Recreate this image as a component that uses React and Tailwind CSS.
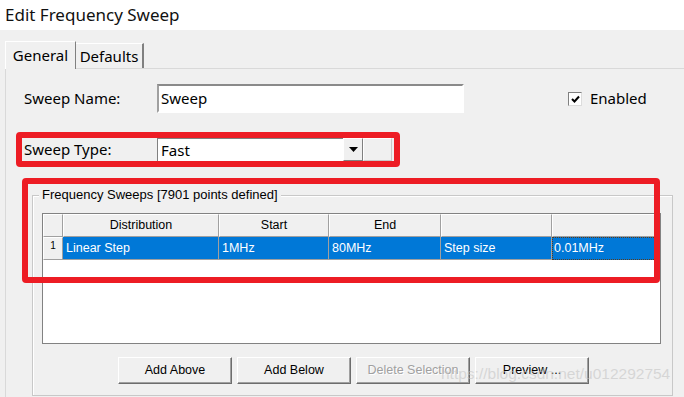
const ui = { fontFamily: '"Noto Sans", "Open Sans", sans-serif' };
const small = { fontFamily: '"Liberation Sans", Arial, sans-serif' };

const columns = [
  { label: "Distribution", w: "w-[156px]", value: "Linear Step" },
  { label: "Start", w: "w-[110px]", value: "1MHz" },
  { label: "End", w: "w-[112px]", value: "80MHz" },
  { label: "", w: "w-[111px]", value: "Step size" },
  { label: "", w: "w-[104px]", value: "0.01MHz" },
];

function WinButton({ children, disabled }) {
  return (
    <div className="flex h-[27px] w-[114px] items-center justify-center border border-t-white border-l-white border-r-[#6d6d6d] border-b-[#6d6d6d] bg-[#f0f0f0] shadow-[inset_-1px_-1px_0_#a0a0a0]">
      <span
        className={
          disabled
            ? "text-[12.5px] text-[#a0a0a0] [text-shadow:1px_1px_0_#ffffff]"
            : "text-[12.5px] text-black"
        }
      >
        {children}
      </span>
    </div>
  );
}

export default function App() {
  return (
    <div className="relative h-[397px] w-[684px] overflow-hidden bg-[#f0f0f0] text-black" style={ui}>
      {/* Title bar */}
      <div className="h-[30px] bg-white pl-[5px] text-[17px] leading-[30px] text-[#111]">
        Edit Frequency Sweep
      </div>

      {/* Tabs */}
      <div className="flex h-[38px] items-end pl-[5px]">
        <div className="relative z-10 -mb-px flex h-[28px] w-[71px] items-start justify-center border-l border-t border-r border-l-white border-t-white border-r-[#808080] bg-[#f0f0f0] pt-[2px] text-[15px]">
          General
        </div>
        <div className="flex h-[25px] w-[68px] items-start justify-center border-t border-r-2 border-t-white border-r-[#808080] pt-[1px] text-[15px]">
          Defaults
        </div>
      </div>

      {/* Tab panel */}
      <div className="ml-[5px] h-[340px] border-l border-t border-[#d9d9d9] pt-[15px]">
        {/* Sweep name row */}
        <div className="flex h-[29px] items-center pl-[18px]">
          <div className="w-[133px] text-[15px]">Sweep Name:</div>
          <div className="flex h-[29px] w-[307px] items-center border-2 border-t-[#8a8a8a] border-l-[#a0a0a0] border-r-white border-b-white bg-white pl-[2px] text-[15px]">
            Sweep
          </div>
          <div className="ml-[104px] flex items-center gap-[8px]">
            <div className="flex h-[14px] w-[14px] items-center justify-center border border-t-[#808080] border-l-[#808080] border-r-[#dcdcdc] border-b-[#dcdcdc] bg-white">
              <svg width="9" height="8" viewBox="0 0 9 8">
                <path d="M1 4 L3.5 6.5 L8 1.5" stroke="#000" strokeWidth="2" fill="none" />
              </svg>
            </div>
            <span className="text-[15px]">Enabled</span>
          </div>
        </div>

        {/* Sweep type row */}
        <div className="mt-[25px] flex h-[23px] items-center pl-[18px]">
          <div className="flex h-[23px] w-[133px] items-center text-[15px]">
            Sweep Type:
          </div>
          <div className="flex h-[23px] w-[186px] items-center border-l border-t border-[#808080] bg-white pl-[3px] text-[15px]">
            Fast
          </div>
          <div className="flex h-[23px] w-[20px] items-center justify-center border border-t-white border-l-white border-r-[#808080] border-b-[#808080] bg-[#f0f0f0]">
            <svg width="9" height="5" viewBox="0 0 9 5">
              <path d="M0 0 H9 L4.5 5 Z" fill="#000" />
            </svg>
          </div>
          <div className="h-[23px] w-[29px] border border-t-white border-l-white border-r-[#c8c8c8] border-b-[#c8c8c8] bg-[#f0f0f0]" />
        </div>

        {/* Frequency sweeps group */}
        <div className="ml-[26px] mt-[34px] h-[201px] w-[641px] border border-[#c8c8c8] shadow-[inset_1px_1px_0_#ffffff]" style={small}>
          <div className="-mt-[9px] ml-[6px] h-[16px] w-fit bg-[#f0f0f0] px-[3px] text-[13px] leading-[16px]">
            Frequency Sweeps [7901 points defined]
          </div>

          {/* Grid */}
          <div className="ml-[9px] mt-[10px] h-[131px] w-[619px] border border-[#828282] bg-white">
            <div className="flex h-[23px]">
              <div className="h-[23px] w-[20px] border border-t-white border-l-white border-r-[#a0a0a0] border-b-[#a0a0a0] bg-[#f0f0f0]" />
              {columns.map((col, index) => (
                <div
                  key={index}
                  className={`${col.w} flex h-[23px] items-center justify-center border border-t-white border-l-white border-r-[#a0a0a0] border-b-[#a0a0a0] bg-[#f0f0f0] text-[12.5px]`}
                >
                  {col.label}
                </div>
              ))}
            </div>
            <div className="flex h-[23px]">
              <div className="flex h-[23px] w-[20px] items-start justify-center border border-t-white border-l-white border-r-[#a0a0a0] border-b-[#a0a0a0] bg-[#f0f0f0] pt-[3px] text-[10px] leading-[10px]">
                1
              </div>
              {columns.map((col, index) => (
                <div
                  key={index}
                  className={
                    index === columns.length - 1
                      ? `${col.w} flex h-[23px] items-center border border-dotted border-[#5a3a1a] bg-[#0078d7] pl-[1px] text-[12.5px] text-white`
                      : `${col.w} flex h-[23px] items-center border-r border-b border-[#a0a0a0] bg-[#0078d7] pl-[3px] text-[12.5px] text-white`
                  }
                >
                  {col.value}
                </div>
              ))}
            </div>
          </div>

          {/* Buttons */}
          <div className="ml-[85px] mt-[13px] flex gap-[5px]">
            <WinButton>Add Above</WinButton>
            <WinButton>Add Below</WinButton>
            <WinButton disabled>Delete Selection</WinButton>
            <WinButton>Preview ...</WinButton>
          </div>
        </div>
      </div>

      {/* Annotation boxes */}
      <div className="absolute left-[16px] top-[132px] h-[35px] w-[384px] rounded-[4px] border-[6px] border-[#ed1c24]" />
      <div className="absolute left-[22px] top-[178px] h-[105px] w-[638px] rounded-[4px] border-[6px] border-[#ed1c24]" />

      {/* Watermark */}
      <div
        className="absolute left-[441px] top-[362px] text-[15.5px] text-[#c4c4c4]/60"
        style={{ fontFamily: '"Liberation Sans", Arial, sans-serif' }}
      >
        https://blog.csdn.net/u012292754
      </div>
    </div>
  );
}
